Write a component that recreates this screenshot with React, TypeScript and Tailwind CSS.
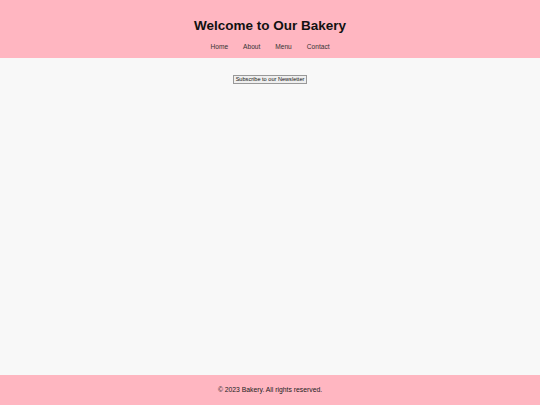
import React from 'react';

const links = ['Home', 'About', 'Menu', 'Contact'];

const App: React.FC = () => {
  return (
    <div className="flex min-h-[405px] flex-col bg-[#f8f8f8] font-['Liberation_Sans',Arial,sans-serif]">
      <header className="flex h-[58px] flex-col items-center bg-[#ffb6c1] pt-[18px]">
        <h1 className="text-[13.5px] font-bold leading-[16px] text-[#111]">Welcome to Our Bakery</h1>
        <nav className="mt-[8.5px] flex gap-[15px] text-[6.6px] leading-[8px] text-[#333]">
          {links.map((link) => (
            <a key={link} href="#" className="text-[#333]">
              {link}
            </a>
          ))}
        </nav>
      </header>

      <main className="flex flex-1 justify-center pt-[17px]">
        <button className="h-[9px] border border-[#999] bg-[#efefef] px-[2px] text-[5.6px] leading-[7px] text-[#111]">
          Subscribe to our Newsletter
        </button>
      </main>

      <footer className="flex h-[30px] items-center justify-center bg-[#ffb6c1] text-[6.8px] text-[#222]">
        © 2023 Bakery. All rights reserved.
      </footer>
    </div>
  );
};

export default App;
